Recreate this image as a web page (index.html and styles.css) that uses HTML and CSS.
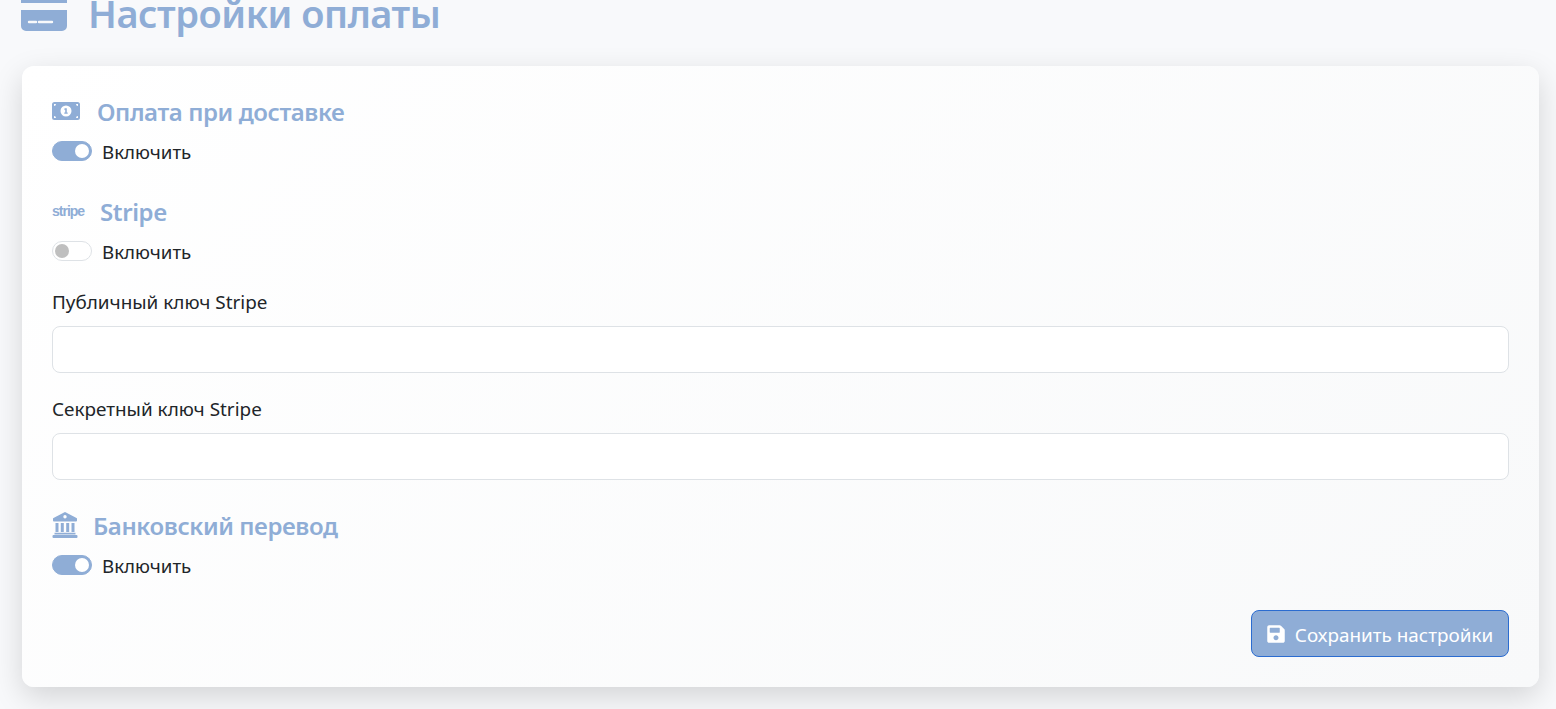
FILE: index.html
```html
<!DOCTYPE html>
<html lang="ru">
<head>
    <meta charset="UTF-8">
    <title>Настройки оплаты</title>
    <link rel="stylesheet" href="styles.css">
</head>
<body>
    <div class="page">
        <h1 class="page-title">
            <svg class="title-icon" viewBox="0 -10 46 41"><path d="M0 -5a4 4 0 0 1 4-4h38a4 4 0 0 1 4 4v8H0zM0 10h46v16a5 5 0 0 1-5 5H5a5 5 0 0 1-5-5zM8 20.800a1.200 1.200 0 0 0 0 2.400h7a1.200 1.200 0 0 0 0-2.400zM18 20.800a1.200 1.200 0 0 0 0 2.400h13a1.200 1.200 0 0 0 0-2.400z" fill-rule="evenodd"/></svg>
            Настройки оплаты
        </h1>

        <form class="card">
            <!-- наложенный платёж -->
            <section class="method">
                <h2 class="method-title">
                    <svg class="icon-money" viewBox="0 0 28 18"><path d="M2.500 0h23a2.500 2.500 0 0 1 2.500 2.500v13a2.500 2.500 0 0 1-2.500 2.500h-23a2.500 2.500 0 0 1-2.500-2.500v-13a2.500 2.500 0 0 1 2.500-2.500zM2 2v2a2 2 0 0 0 2-2zM26 2h-2a2 2 0 0 0 2 2zM2 16h2a2 2 0 0 0-2-2zM26 16v-2a2 2 0 0 0-2 2zM14 3.500a5.500 5.500 0 1 0 0 11a5.500 5.500 0 0 0 0-11zM13 6.300h1.800v4.200h.9v1.200h-3.400v-1.200h.9v-2.800h-.9v-.9z" fill-rule="evenodd"/></svg>
                    Оплата при доставке
                </h2>
                <label class="switch-row">
                    <input class="switch" type="checkbox" checked>
                    <span class="switch-text">Включить</span>
                </label>
            </section>

            <!-- stripe -->
            <section class="method method-fields">
                <h2 class="method-title">
                    <span class="stripe-logo">stripe</span>
                    Stripe
                </h2>
                <label class="switch-row">
                    <input class="switch" type="checkbox">
                    <span class="switch-text">Включить</span>
                </label>
                <div class="field field-first">
                    <label class="field-label" for="stripePublic">Публичный ключ Stripe</label>
                    <input class="field-input" id="stripePublic" type="text">
                </div>
                <div class="field">
                    <label class="field-label" for="stripeSecret">Секретный ключ Stripe</label>
                    <input class="field-input" id="stripeSecret" type="text">
                </div>
            </section>

            <!-- банк -->
            <section class="method">
                <h2 class="method-title">
                    <svg class="icon-bank" viewBox="0 0 26 26"><path d="M12 .4a2 2 0 0 1 2 0l10.500 5.600a1 1 0 0 1 .5 .9v1.600a1 1 0 0 1-1 1H2a1 1 0 0 1-1-1v-1.600a1 1 0 0 1 .5-.9zM13 3a1.700 1.700 0 1 0 0 3.400a1.700 1.700 0 0 0 0-3.400z" fill-rule="evenodd"/><path d="M3.500 11h3v9h-3zM8.800 11h3v9h-3zM14.200 11h3v9h-3zM19.500 11h3v9h-3zM2.500 20.800h21v1.700h-21zM1.500 23h23a1 1 0 0 1 1 1v1a1 1 0 0 1-1 1h-23a1 1 0 0 1-1-1v-1a1 1 0 0 1 1-1z"/></svg>
                    Банковский перевод
                </h2>
                <label class="switch-row">
                    <input class="switch" type="checkbox" checked>
                    <span class="switch-text">Включить</span>
                </label>
            </section>

            <div class="actions">
                <button class="btn-save" type="button">
                    <svg class="icon-save" viewBox="0 0 448 512"><path d="M433.941 129.941l-83.882-83.882A48 48 0 0 0 316.118 32H48C21.490 32 0 53.490 0 80v352c0 26.510 21.490 48 48 48h352c26.510 0 48-21.490 48-48V163.882a48 48 0 0 0-14.059-33.941zM224 416c-35.346 0-64-28.654-64-64 0-35.346 28.654-64 64-64s64 28.654 64 64c0 35.346-28.654 64-64 64zm96-304.520V212c0 6.627-5.373 12-12 12H76c-6.627 0-12-5.373-12-12V108c0-6.627 5.373-12 12-12h228.520c3.183 0 6.235 1.264 8.485 3.515l3.480 3.480A11.996 11.996 0 0 1 320 111.480z"/></svg>
                    <span class="btn-text">Сохранить настройки</span>
                </button>
            </div>
        </form>
    </div>
</body>
</html>
```

FILE: styles.css
```css
*{
    box-sizing: border-box;
    margin: 0;
    padding: 0;
}

html,body{
    height: 100%;
    overflow: hidden;
}

body{
    background: #f8f9fb;
    color: #212529;
    font-family: "Noto Sans", "Open Sans", sans-serif;
    font-size: 16px;
}

.page{
    padding: 0 17px 0 21px;
}

/* страница прокручена, заголовок срезан сверху */
.page-title{
    display: flex;
    align-items: flex-end;
    gap: 21px;
    height: 41px;
    margin-top: -10px;
    margin-bottom: 35px;
    color: #8fadd6;
    font-size: 38px;
    font-weight: 600;
    letter-spacing: -0.45px;
    line-height: 36px;
    white-space: nowrap;
}

.title-icon{
    flex: none;
    width: 46px;
    height: 41px;
    fill: #8fadd6;
}

.card{
    height: 621px;
    margin-left: 1px;
    padding: 30px;
    border-radius: 12px;
    background: linear-gradient(135deg, #ffffff, #f8f9fa);
    box-shadow: 0 10px 30px rgba(0,0,0,0.15);
}

.method{
    margin-bottom: 33px;
}

.method-fields{
    margin-bottom: 30px;
}

.method-title{
    display: flex;
    align-items: center;
    height: 32px;
    margin-bottom: 11px;
    padding-bottom: 2px;
    color: #8fadd6;
    font-size: 24px;
    font-weight: 600;
    letter-spacing: -0.4px;
}

.icon-money{
    width: 28px;
    height: 18px;
    margin-right: 17px;
    fill: #8fadd6;
}

.icon-bank{
    width: 26px;
    height: 26px;
    margin-right: 15px;
    fill: #8fadd6;
}

.stripe-logo{
    width: 32px;
    margin-right: 16px;
    font-family: "Liberation Sans", sans-serif;
    font-size: 14px;
    font-weight: 700;
    letter-spacing: -1px;
}

.switch-row{
    display: flex;
    align-items: center;
    gap: 10px;
    height: 24px;
    font-size: 18.7px;
}

.switch-text{
    padding-top: 1px;
}

.switch{
    appearance: none;
    width: 40px;
    height: 20px;
    border: 1px solid #dee2e6;
    border-radius: 10px;
    background: #fff;
    position: relative;
}

.switch::after{
    content: "";
    position: absolute;
    top: 2px;
    left: 2px;
    width: 14px;
    height: 14px;
    border-radius: 50%;
    background: #bfbfbf;
}

.switch:checked{
    border-color: #8fadd6;
    background: #8fadd6;
}

.switch:checked::after{
    left: auto;
    right: 2px;
    background: #fff;
}

.field{
    margin-top: 24px;
}

.field-first{
    margin-top: 27px;
}

.field-label{
    display: block;
    height: 24px;
    margin-bottom: 12px;
    font-size: 18.9px;
    line-height: 24px;
}

.field-input{
    display: block;
    width: 100%;
    height: 47px;
    border: 1px solid #dee2e6;
    border-radius: 8px;
    background: #fff;
}

.actions{
    display: flex;
    justify-content: flex-end;
}

.btn-save{
    display: flex;
    align-items: center;
    gap: 10px;
    width: 258px;
    height: 47px;
    justify-content: center;
    border: 1px solid #2b6cd0;
    border-radius: 8px;
    background: #8fadd6;
    color: #fff;
    font-family: inherit;
    font-size: 18.9px;
}

.btn-text{
    padding-top: 2px;
}

.icon-save{
    width: 18px;
    height: 20px;
    fill: #fff;
}
```
